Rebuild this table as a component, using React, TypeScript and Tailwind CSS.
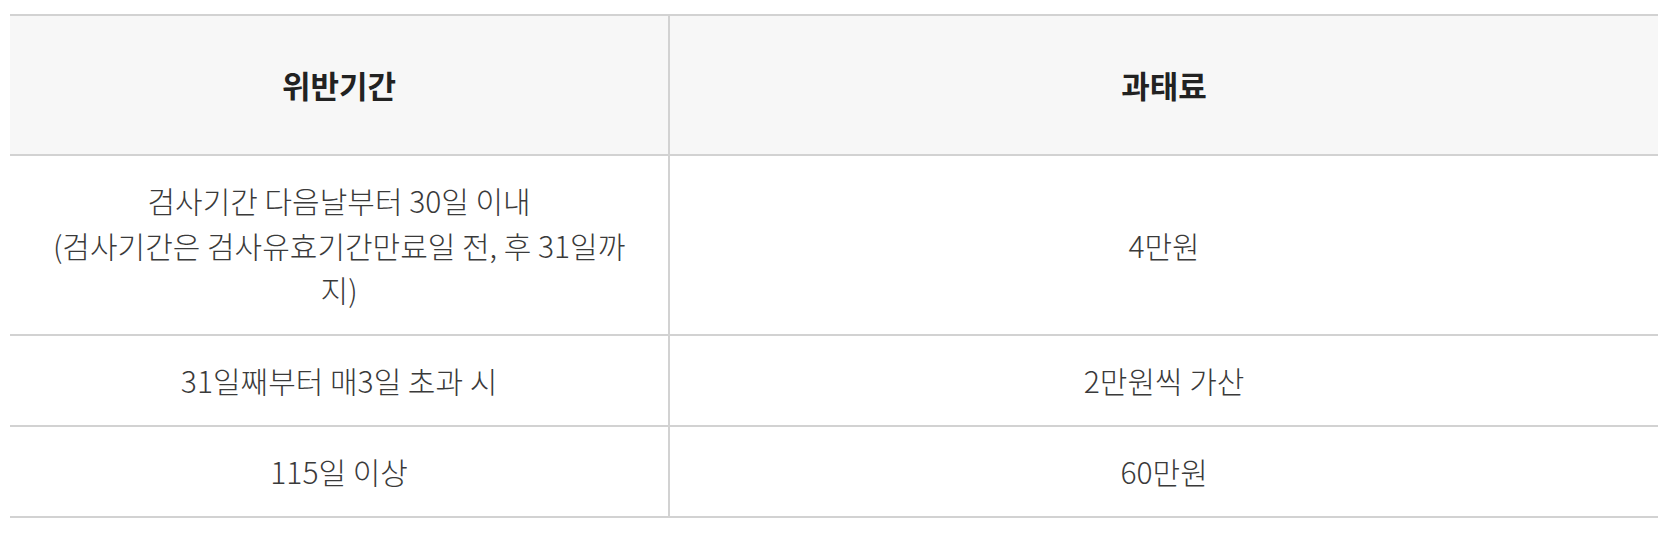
import React from "react";

const rows: { period: React.ReactNode; fine: string }[] = [
  {
    period: (
      <>
        검사기간 다음날부터 30일 이내
        <br />
        (검사기간은 검사유효기간만료일 전, 후 31일까
        <br />
        지)
      </>
    ),
    fine: "4만원",
  },
  { period: "31일째부터 매3일 초과 시", fine: "2만원씩 가산" },
  { period: "115일 이상", fine: "60만원" },
];

export default function App() {
  return (
    <div
      className="bg-white w-[1672px] h-[534px] pt-[14px] pl-[10px]"
      style={{ fontFamily: '"Noto Sans CJK KR", "Noto Sans", sans-serif' }}
    >
      <table className="w-[1648px] border-collapse table-fixed text-[30px] leading-[44.5px]">
        <colgroup>
          <col className="w-[40%]" />
          <col className="w-[60%]" />
        </colgroup>
        <thead>
          <tr className="bg-[#f7f7f7] border-t-2 border-b-2 border-[#d2d2d2]">
            <th className="h-[140px] p-0 text-center text-[31px] font-bold text-[#222] border-r-2 border-[#d2d2d2]">
              위반기간
            </th>
            <th className="h-[140px] p-0 text-center text-[31px] font-bold text-[#222]">과태료</th>
          </tr>
        </thead>
        <tbody>
          {rows.map((r, i) => (
            <tr key={i} className="border-b-2 border-[#d2d2d2]">
              <td className="px-[20px] py-[22.25px] text-center font-light text-[#3a3a3a] border-r-2 border-[#d2d2d2]">
                {r.period}
              </td>
              <td className="px-[20px] py-[22.25px] text-center font-light text-[#3a3a3a]">
                {r.fine}
              </td>
            </tr>
          ))}
        </tbody>
      </table>
    </div>
  );
}
